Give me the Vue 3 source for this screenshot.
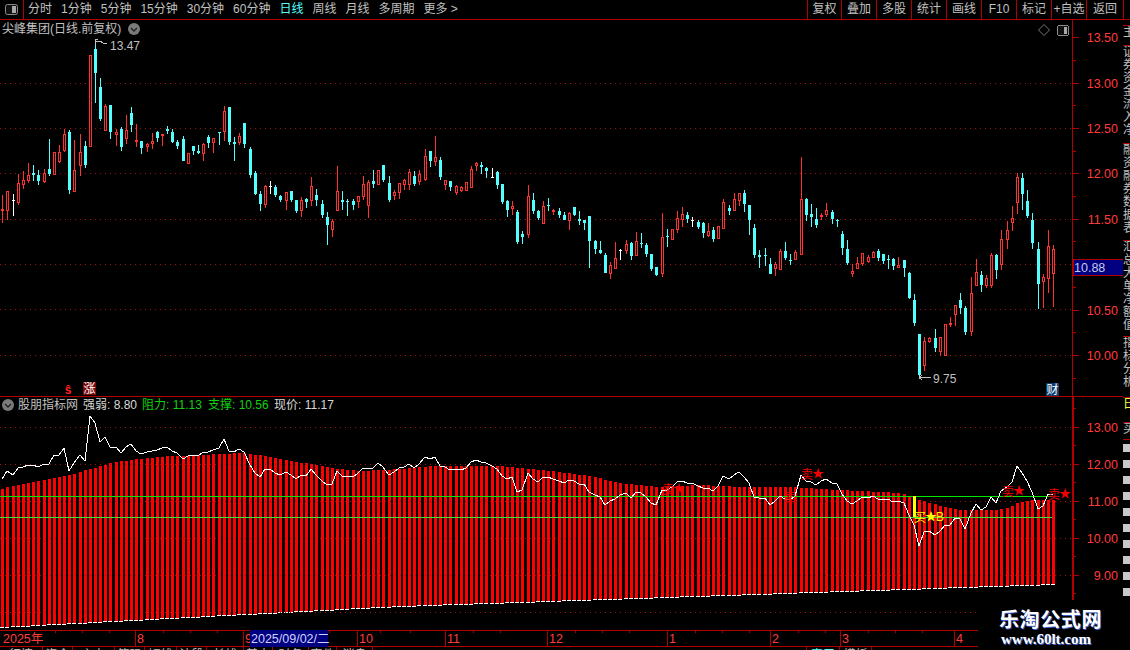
<script setup>
const leftTabs = [
  { label: '分时' }, { label: '1分钟' }, { label: '5分钟' }, { label: '15分钟' }, { label: '30分钟' },
  { label: '60分钟' }, { label: '日线', active: true }, { label: '周线' }, { label: '月线' },
  { label: '多周期' }, { label: '更多 >' }
]
const rightTools = ['复权', '叠加', '多股', '统计', '画线', 'F10', '标记', '+自选', '返回']

// kind, body top, body bottom, high, low -- pixel rows of the upper pane
const raw = `r209,211,195,223 r191,211,191,220 w200,201,194,216 r183,203,174,205 r180,185,171,189 r175,181,163,183
c173,175,165,181 c175,181,170,185 r173,182,169,183 c169,174,139,176 r152,175,152,175 r152,162,145,163 r134,151,129,152
c132,190,130,194 r170,192,140,192 r152,166,134,176 c146,165,141,168 r55,147,55,147 c49,73,40,103 c87,119,78,121
r106,131,104,131 c105,132,105,139 r132,135,129,146 c129,147,127,151 r130,139,115,144 c113,125,107,132 r140,142,124,147
c141,148,141,154 r144,147,143,152 r141,144,133,149 c132,138,131,142 r134,136,134,146 c129,131,126,134 c132,142,129,143
c142,146,140,149 c139,161,136,161 r153,164,153,164 c146,151,146,155 c151,153,145,154 r144,154,143,161 c137,143,135,148
r138,143,138,153 c132,133,132,145 r111,132,106,141 c107,142,107,145 c142,144,137,161 r136,143,133,145 c123,144,123,148
c149,175,147,178 c173,194,171,195 c194,204,191,211 r186,205,185,208 w186,187,181,194 c187,195,185,197 c196,200,195,202
r192,201,192,210 c191,200,191,202 c200,211,200,213 r200,211,197,217 c199,202,198,208 r186,201,177,206 c195,200,189,206
c204,215,200,218 c217,225,212,245 r221,230,219,237 r191,211,166,211 c200,202,191,210 c201,202,199,216 c201,205,199,210
r196,202,196,208 r184,197,176,200 r182,206,180,218 c181,184,170,188 r170,185,170,185 c165,180,165,182 c183,200,176,202
r192,196,190,200 r183,193,183,199 r180,185,179,190 r172,185,169,190 c176,184,171,186 r174,182,170,185 r156,180,149,181
c151,161,151,167 r157,162,136,166 c160,177,157,180 r180,185,180,190 c181,187,181,191 r186,193,185,195 r187,191,186,192
r182,191,182,191 r169,188,166,188 r163,166,162,171 c165,167,162,174 c168,171,167,178 w177,178,168,178 c172,185,171,189
c184,202,184,204 c201,210,200,217 r206,209,201,215 c212,242,210,244 c234,237,231,244 r196,235,185,238 c200,211,193,214
c211,218,210,220 r206,224,201,224 c205,206,198,211 r210,212,209,215 c211,215,208,218 c215,220,212,220 r213,221,212,230
c207,215,207,216 c219,221,211,225 c220,223,220,230 c216,241,216,268 c241,249,240,254 c250,253,241,254 c255,273,253,273
r265,274,262,279 r258,269,242,269 w250,251,249,260 r244,251,240,254 c243,256,242,260 r241,256,232,256 c243,244,233,248
c245,254,243,257 c254,269,254,271 c267,275,267,276 r237,274,213,277 c236,237,229,247 r229,240,229,240 r218,230,211,233
r214,220,207,227 c215,219,212,223 w220,221,217,227 c222,227,220,229 c223,233,222,238 r231,236,223,237 c230,239,227,242
r226,239,226,239 r202,229,199,229 c208,211,205,215 r199,211,193,211 r193,201,193,206 c193,204,190,212 c205,220,205,235
c228,255,224,258 c255,257,250,268 c255,256,248,266 c264,274,258,274 r264,269,262,276 r251,270,249,270 c251,258,242,260
c260,261,254,265 r252,260,250,260 r199,255,157,255 c199,215,198,221 c214,217,204,227 c219,225,208,228 r215,217,213,220
r210,215,203,217 c212,219,210,224 c220,221,219,227 c234,248,231,255 c249,263,240,265 r271,274,264,277 r263,269,257,269
r253,264,253,266 r257,262,255,263 r252,258,251,258 c251,258,249,261 c254,261,254,264 c259,260,255,269 c259,266,258,270
r265,268,257,268 c260,268,260,277 c273,298,272,299 c300,323,294,326 c334,375,334,378 r341,366,337,371 r338,342,337,343
c338,348,329,352 r337,352,337,356 r324,356,324,356 r323,324,317,327 r305,315,305,326 c300,308,293,314 c308,332,306,335
r293,332,277,336 r272,286,259,286 c275,285,271,292 r278,286,275,288 r255,286,253,288 c255,270,254,279 r239,265,230,270
r230,240,221,249 r218,223,206,231 r177,203,173,214 c178,194,173,210 c201,216,190,218 c220,243,213,249 c249,284,242,309
r277,282,274,308 r246,279,230,293 r249,274,245,307`

const STEP = (1053 - 2.3) / 204
const candles = raw.trim().split(/\s+/).map((tok, i) => {
  const [top, bottom, high, low] = tok.slice(1).split(',').map(Number)
  return { kind: tok[0], x: Math.round(2.3 + STEP * i), top, bottom, high, low }
})

function lerp(points, x) {
  for (let i = 1; i < points.length; i++) {
    if (x <= points[i][0]) {
      const [x0, y0] = points[i - 1]
      const [x1, y1] = points[i]
      return y0 + ((y1 - y0) * (x - x0)) / (x1 - x0)
    }
  }
  return points[points.length - 1][1]
}

const barTop = [[0, 489], [22, 484], [53, 478], [73, 474], [90, 469], [110, 463], [130, 460], [150, 458], [170, 456],
  [190, 456], [220, 454], [240, 453], [260, 455], [290, 461], [310, 464], [340, 469], [360, 471], [400, 469], [430, 466],
  [500, 466], [560, 472], [590, 476], [620, 483], [660, 487], [700, 485], [740, 487], [790, 487], [840, 490], [883, 492],
  [900, 493], [919, 500], [930, 503], [947, 508], [963, 510], [977, 510], [993, 510], [1007, 508], [1017, 503], [1033, 500],
  [1053, 500]]
const barBottom = [[0, 627], [133, 620], [400, 606], [1053, 584]]

const bars = candles.map(c => {
  const top = Math.round(lerp(barTop, c.x))
  return { x: c.x, top, height: Math.round(lerp(barBottom, c.x)) - top }
})

// the white line is the close, redrawn on the lower pane's scale
const closePath = candles
  .map(c => {
    const close = c.kind === 'c' ? c.bottom : c.top
    return `${c.x},${Math.round(501 - ((264 - close) / 91) * 37)}`
  })
  .join(' ')

const upperGrid = [83, 128, 173, 219, 264, 309, 355]
const lowerGrid = [427, 464, 501, 538, 575, 612]
const upperScale = [
  { y: 37, label: '13.50' }, { y: 83, label: '13.00' }, { y: 128, label: '12.50' }, { y: 173, label: '12.00' },
  { y: 219, label: '11.50' }, { y: 310, label: '10.50' }, { y: 355, label: '10.00' }
]
const lowerScale = [
  { y: 427, label: '13.00' }, { y: 464, label: '12.00' }, { y: 501, label: '11.00' },
  { y: 538, label: '10.00' }, { y: 575, label: '9.00' }
]
const upperMinor = [60, 105, 151, 196, 241, 287, 332, 378]
const lowerMinor = [408, 445, 482, 519, 556, 593]

const sells = [
  { x: 668, y: 489, star: true }, { x: 790, y: 497 }, { x: 807, y: 474, star: true },
  { x: 1008, y: 491, star: true }, { x: 1054, y: 494, star: true }
]

const months = [
  { x: 136, label: '8' }, { x: 244, label: '9' }, { x: 358, label: '10' }, { x: 446, label: '11' },
  { x: 548, label: '12' }, { x: 668, label: '1' }, { x: 771, label: '2' }, { x: 841, label: '3' }, { x: 955, label: '4' }
]
const dateTicks = [55, 82, 109, 163, 190, 217, 329, 380, 410, 473, 500, 575, 602, 629, 695, 722, 749, 798, 825, 868, 895, 922]

const bottomTabs = [
  { w: 43, label: '行情' }, { w: 30, label: '资金' }, { w: 42, label: '主力' }, { w: 30, label: '筹码' },
  { w: 32, label: '短线' }, { w: 30, label: '波段' }, { w: 37, label: '长线' }, { w: 29, label: '基本' },
  { w: 36, label: '财务' }, { w: 28, label: '事件' }, { w: 36, label: '消息' }, { w: 434, label: '' },
  { w: 33, label: '窗口', active: true }, { w: 32, label: '模板' }
]

const stripGroups = [
  { h: 6, text: '' }, { h: 20, text: '主' }, { h: 98, text: '证券资金流入净' }, { h: 97, text: '融资融券数据表' },
  { h: 96, text: '汇总大单净额值' }, { h: 61, text: '指标分析' }
]
const stripBlocks = 10
</script>

<template>
  <div class="terminal">
    <header class="toolbar">
      <div class="panel-toggle">
        <svg width="13" height="11" viewBox="0 0 13 11">
          <rect x="0.5" y="0.5" width="12" height="10" rx="2" fill="#111" stroke="#8a8a8a" />
          <rect x="7" y="2" width="4" height="7" fill="#a8a8a8" />
        </svg>
      </div>
      <nav class="tabs">
        <span v-for="tab in leftTabs" :key="tab.label" class="tab" :class="{ active: tab.active }">{{ tab.label }}</span>
      </nav>
      <div class="tools">
        <span v-for="tool in rightTools" :key="tool" class="tool">{{ tool }}</span>
      </div>
    </header>

    <div class="workspace">
      <div class="plots">
        <section class="pane upper">
          <svg class="chart" width="1123" height="377" viewBox="0 20 1123 377" shape-rendering="crispEdges">
            <line v-for="y in upperGrid" :key="y" x1="0" x2="1072" :y1="y + 0.5" :y2="y + 0.5" class="grid" />
            <g v-for="(c, i) in candles" :key="i">
              <rect :x="c.x" :y="c.high" width="1" :height="Math.max(c.low - c.high, 1)" :class="'wick-' + c.kind" />
              <rect v-if="c.kind === 'r'" :x="c.x - 0.5" :y="c.top + 0.5" width="2" :height="Math.max(c.bottom - c.top - 1, 1)" class="hollow" />
              <rect v-else :x="c.x - 1" :y="c.top" width="3" :height="Math.max(c.bottom - c.top, 1)" :class="'wick-' + c.kind" />
            </g>
            <path d="M95.5 45 V39.5 H98 M96 41 L100 41 L103 43 L107 43" class="note-line" />
            <text x="110" y="50" class="note">13.47</text>
            <path d="M919 377.5 H931 M919 377.5 L922 375 M919 377.5 L922 380" class="note-line" />
            <text x="933" y="383" class="note">9.75</text>

            <text x="68" y="394" class="flag-s" text-anchor="middle">ŝ</text>
            <rect x="83" y="382" width="13" height="13" fill="#7a0a0a" />
            <text x="89.5" y="393" class="flag-text" text-anchor="middle">涨</text>
            <rect x="1046" y="383" width="13" height="13" fill="#0c3d6e" />
            <text x="1052.5" y="394" class="flag-text" text-anchor="middle">财</text>

            <path d="M1044 24.5 L1049.5 30 L1044 35.5 L1038.5 30 Z" class="diamond" shape-rendering="auto" />
            <rect x="1057.5" y="25.5" width="11" height="10" rx="2" fill="#111" stroke="#8a8a8a" />
            <rect x="1064" y="27" width="3" height="7" fill="#a8a8a8" />

            <line x1="1072.5" x2="1072.5" y1="20" y2="397" class="frame" />
            <line x1="1123.5" x2="1123.5" y1="20" y2="397" class="frame" />
            <line x1="0" x2="1123" y1="396.5" y2="396.5" class="frame" />
            <line v-for="y in upperMinor" :key="y" x1="1073" x2="1076" :y1="y + 0.5" :y2="y + 0.5" class="frame" />
            <g v-for="t in upperScale" :key="t.y">
              <line x1="1073" x2="1079" :y1="t.y + 0.5" :y2="t.y + 0.5" class="frame" />
              <text x="1118" :y="t.y + 5" class="scale" text-anchor="end">{{ t.label }}</text>
            </g>
            <rect x="1073" y="259.5" width="50" height="16" class="price-box" />
            <text x="1074" y="272" class="price-text">10.88</text>
          </svg>
          <div class="legend legend-top">
            <span>尖峰集团(日线.前复权)</span>
            <svg width="12" height="12" viewBox="0 0 12 12" class="drop">
              <circle cx="6" cy="6" r="6" fill="#7a7a7a" />
              <path d="M3 5 L6 8 L9 5" fill="none" stroke="#222" stroke-width="1.4" />
            </svg>
          </div>
        </section>

        <section class="pane lower">
          <svg class="chart" width="1123" height="233" viewBox="0 397 1123 233" shape-rendering="crispEdges">
            <g v-for="b in bars" :key="b.x">
              <rect :x="b.x - 1" :y="b.top" width="3" :height="b.height" fill="#ff0000" />
              <rect :x="b.x - 2" :y="b.top + b.height" width="4" height="1" fill="#ffffff" />
            </g>
            <line v-for="y in lowerGrid" :key="y" x1="0" x2="1072" :y1="y + 0.5" :y2="y + 0.5" class="grid" />
            <line x1="0" x2="1052" y1="496.5" y2="496.5" class="green" />
            <line x1="0" x2="1052" y1="517.5" y2="517.5" class="green pale" />
            <rect x="913" y="496" width="3" height="21" fill="#ffff00" />
            <polyline :points="closePath" class="close-line" />

            <g v-for="s in sells" :key="s.x">
              <text :x="s.x" :y="s.y + 5" class="sign sell" text-anchor="middle">卖</text>
              <text v-if="s.star" :x="s.x + 11" :y="s.y + 4" class="sign star" text-anchor="middle">★</text>
            </g>
            <text x="920" y="522" class="sign buy" text-anchor="middle">买</text>
            <text x="931" y="521" class="sign buy" text-anchor="middle">★</text>
            <text x="940" y="521" class="sign buy" text-anchor="middle">B</text>

            <line x1="1072.5" x2="1072.5" y1="397" y2="600" class="frame thick" />
            <line x1="1123.5" x2="1123.5" y1="397" y2="600" class="frame thick" />
            <line v-for="y in lowerMinor" :key="y" x1="1073" x2="1076" :y1="y + 0.5" :y2="y + 0.5" class="frame" />
            <g v-for="t in lowerScale" :key="t.y">
              <line x1="1073" x2="1079" :y1="t.y + 0.5" :y2="t.y + 0.5" class="frame" />
              <text x="1118" :y="t.y + 5" class="scale" text-anchor="end">{{ t.label }}</text>
            </g>
          </svg>
          <div class="legend legend-bottom">
            <svg width="12" height="12" viewBox="0 0 12 12">
              <circle cx="6" cy="6" r="6" fill="#7a7a7a" />
              <path d="M3 5 L6 8 L9 5" fill="none" stroke="#222" stroke-width="1.4" />
            </svg>
            <span class="indicator">股朋指标网</span>
            <span class="value">强弱: 8.80</span>
            <span class="value good">阻力: 11.13</span>
            <span class="value good">支撑: 10.56</span>
            <span class="value">现价: 11.17</span>
          </div>
        </section>

        <svg class="dates" width="1123" height="17" viewBox="0 630 1123 17" shape-rendering="crispEdges">
          <line x1="0" x2="1072" y1="630.5" y2="630.5" class="frame" />
          <line x1="0" x2="1072" y1="646.5" y2="646.5" class="frame" />
          <line v-for="x in dateTicks" :key="x" :x1="x + 0.5" :x2="x + 0.5" y1="630" y2="633" class="frame" />
          <text x="3" y="643" class="date">2025年</text>
          <g v-for="m in months" :key="m.x">
            <line :x1="m.x - 0.5" :x2="m.x - 0.5" y1="630" y2="646" class="frame" />
            <text :x="m.x + 1" y="643" class="date">{{ m.label }}</text>
          </g>
          <rect x="250" y="630" width="78" height="17" fill="#000080" />
          <text x="251" y="643" class="cursor">2025/09/02/二</text>
        </svg>

        <div class="bottom-tabs">
          <span v-for="t in bottomTabs" :key="t.w + t.label" class="bottom-tab" :class="{ active: t.active }" :style="{ width: t.w + 'px' }">{{ t.label }}</span>
        </div>
      </div>

      <aside class="strip">
        <div v-for="(g, i) in stripGroups" :key="i" class="strip-group" :style="{ height: g.h + 'px' }">{{ g.text }}</div>
        <div class="strip-group key">日</div>
        <div class="strip-group sub">买</div>
        <div class="strip-blocks">
          <i v-for="n in stripBlocks" :key="n"></i>
        </div>
      </aside>
    </div>

    <div class="watermark">
      <strong>乐淘公式网</strong>
      <em>www.60lt.com</em>
    </div>
  </div>
</template>

<style scoped>
.terminal {
  position: relative;
  width: 1130px;
  height: 650px;
  overflow: hidden;
  background: #000;
  color: #c0c0c0;
  font-family: "Liberation Sans", "Noto Sans CJK SC", sans-serif;
  font-size: 12px;
}

.toolbar {
  display: flex;
  align-items: stretch;
  height: 20px;
  box-sizing: border-box;
  border-bottom: 1px solid #b00000;
  line-height: 19px;
}

.panel-toggle {
  display: flex;
  align-items: center;
  justify-content: center;
  width: 23px;
  border-right: 1px solid #b00000;
}

.tabs {
  display: flex;
  gap: 9px;
  padding-left: 4px;
}

.tab.active {
  color: #54ffff;
}

.tools {
  display: flex;
  margin-left: auto;
  margin-right: 6px;
}

.tool {
  width: 35px;
  box-sizing: border-box;
  border-left: 1px solid #b00000;
  text-align: center;
  white-space: nowrap;
}

.tool:first-child {
  width: 34px;
}

.tool:last-child {
  width: 38px;
  border-right: 1px solid #b00000;
}

.workspace {
  display: flex;
  height: 630px;
}

.plots {
  width: 1123px;
  flex: none;
}

.pane {
  position: relative;
}

.pane.upper {
  height: 377px;
}

.pane.lower {
  height: 233px;
}

.chart,
.dates {
  display: block;
}

.legend {
  position: absolute;
  display: flex;
  align-items: center;
  line-height: 16px;
  white-space: nowrap;
}

.legend-top {
  top: 1px;
  left: 2px;
}

.legend-top .drop {
  margin-left: 7px;
}

.legend-bottom {
  top: 0;
  left: 2px;
}

.indicator {
  width: 65px;
  margin-left: 4px;
}

.value {
  width: 59px;
  color: #d8d8d8;
}

.value.good {
  width: 66px;
  color: #10d010;
}

.grid {
  stroke: #a01010;
  stroke-dasharray: 1 4;
}

.frame {
  stroke: #b00000;
}

.frame.thick {
  stroke-width: 2;
}

.wick-r {
  fill: #ff3232;
}

.wick-c {
  fill: #54ffff;
}

.wick-w {
  fill: #ffffff;
}

.hollow {
  fill: #000;
  stroke: #ff3232;
}

.note {
  fill: #c0c0c0;
  font-size: 12px;
}

.note-line {
  fill: none;
  stroke: #c0c0c0;
}

.flag-s {
  fill: #ff2020;
  font-size: 12px;
  font-weight: 700;
}

.flag-text {
  fill: #fff;
  font-size: 12px;
}

.diamond {
  fill: none;
  stroke: #777;
}

.scale {
  fill: #ff3c3c;
  font-size: 12.5px;
}

.price-box {
  fill: #000080;
  stroke: #b00000;
}

.price-text {
  fill: #c8c8e8;
  font-size: 12.5px;
}

.green {
  stroke: #00e800;
}

.green.pale {
  stroke: #40e040;
}

.close-line {
  fill: none;
  stroke: #fff;
}

.sign {
  font-size: 12px;
}

.sell,
.star {
  fill: #f00000;
}

.buy {
  fill: #ffff00;
}

.date {
  fill: #ff3c3c;
  font-size: 12.5px;
}

.cursor {
  fill: #d0d0ff;
  font-size: 12.5px;
}

.bottom-tabs {
  display: flex;
  height: 4px;
  overflow: hidden;
}

.bottom-tab {
  flex: none;
  box-sizing: border-box;
  border-right: 1px solid #b00000;
  text-align: center;
  line-height: 16px;
  color: #c0c0c0;
}

.bottom-tab.active {
  color: #54ffff;
}

.strip {
  width: 7px;
  height: 630px;
  overflow: hidden;
  flex: none;
  line-height: 13px;
}

.strip-group {
  box-sizing: border-box;
  overflow: hidden;
  border-bottom: 1px solid #b00000;
  width: 12px;
  word-break: break-all;
}

.strip-group.key {
  height: 25px;
  color: #ffff40;
}

.strip-group.sub {
  height: 17px;
}

.strip-blocks {
  display: flex;
  flex-direction: column;
  gap: 8px;
  padding-top: 4px;
}

.strip-blocks i {
  display: block;
  width: 7px;
  height: 8px;
  background: #c8c8c8;
}

.watermark {
  position: absolute;
  right: 0;
  bottom: 0;
  width: 152px;
  height: 50px;
  box-sizing: border-box;
  padding: 8px 0 0 21px;
  background: #000;
  color: #fff;
  text-shadow: 1px 1px 0 #3a5cc8;
}

.watermark strong {
  display: block;
  font-size: 20px;
  line-height: 24px;
  letter-spacing: 0.6px;
}

.watermark em {
  display: block;
  margin: -1px 0 0 2px;
  font-family: "Liberation Serif", serif;
  font-size: 15px;
  font-style: normal;
  font-weight: 700;
  line-height: 16px;
}
</style>
